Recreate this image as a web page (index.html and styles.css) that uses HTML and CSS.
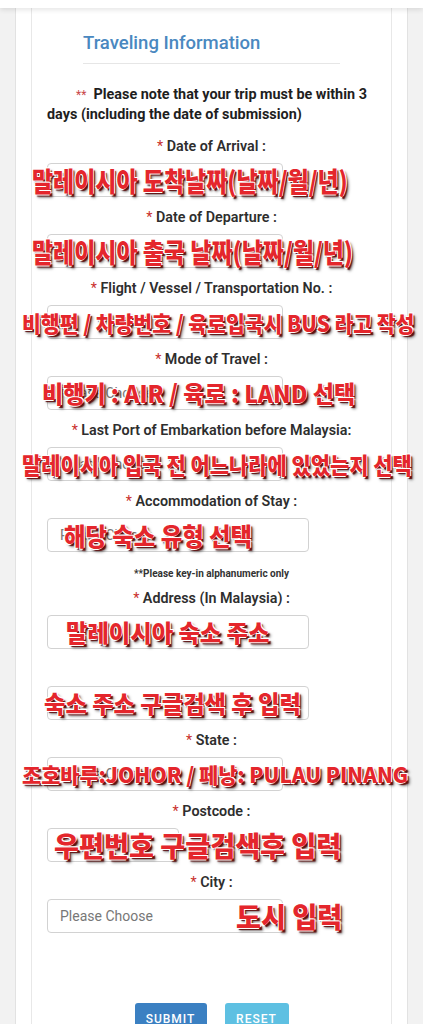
FILE: index.html
```html
<!DOCTYPE html>
<html lang="en">
<head>
<meta charset="utf-8">
<title>Traveling Information</title>
<link rel="stylesheet" href="styles.css">
</head>
<body>
<div class="topbar"></div>
<div class="card">
  <div class="panel">
    <h2 class="title">Traveling Information</h2>
    <hr class="rule">
    <p class="note"><span class="req">**</span>&nbsp; Please note that your trip must be within 3 days (including the date of submission)</p>

    <div class="group">
      <label class="lbl"><span class="req">*</span> Date of Arrival :</label>
      <div class="field w-md"><div class="input"></div><span class="ann ann-1">말레이시아 도착날짜(날짜/월/년)</span></div>
    </div>

    <div class="group">
      <label class="lbl"><span class="req">*</span> Date of Departure :</label>
      <div class="field w-md"><div class="input"></div><span class="ann ann-2">말레이시아 출국 날짜(날짜/월/년)</span></div>
    </div>

    <div class="group">
      <label class="lbl"><span class="req">*</span> Flight / Vessel / Transportation No. :</label>
      <div class="field w-md"><div class="input"></div><span class="ann ann-3">비행편 / 차량번호 / 육로입국시 BUS 라고 작성</span></div>
    </div>

    <div class="group">
      <label class="lbl"><span class="req">*</span> Mode of Travel :</label>
      <div class="field w-md"><div class="input ph">Please Choose</div><span class="ann ann-4">비행기 : AIR / 육로 : LAND 선택</span></div>
    </div>

    <div class="group">
      <label class="lbl"><span class="req">*</span> Last Port of Embarkation before Malaysia:</label>
      <div class="field w-md"><div class="input ph">Please Choose</div><span class="ann ann-5">말레이시아 입국 전 어느나라에 있었는지 선택</span></div>
    </div>

    <div class="group">
      <label class="lbl"><span class="req">*</span> Accommodation of Stay :</label>
      <div class="field w-lg"><div class="input ph">Please Choose</div><span class="ann ann-6">해당 숙소 유형 선택</span></div>
    </div>

    <p class="hint">**Please key-in alphanumeric only</p>

    <div class="group">
      <label class="lbl"><span class="req">*</span> Address (In Malaysia) :</label>
      <div class="field w-lg"><div class="input"></div><span class="ann ann-7">말레이시아 숙소 주소</span></div>
      <div class="field w-lg addr2"><div class="input"></div><span class="ann ann-8">숙소 주소 구글검색 후 입력</span></div>
    </div>

    <div class="group">
      <label class="lbl"><span class="req">*</span> State :</label>
      <div class="field w-md"><div class="input ph">Please Choose</div><span class="ann ann-9">조호바루:JOHOR / 페낭: PULAU PINANG</span></div>
    </div>

    <div class="group">
      <label class="lbl"><span class="req">*</span> Postcode :</label>
      <div class="field w-sm"><div class="input"></div><span class="ann ann-10">우편번호 구글검색후 입력</span></div>
    </div>

    <div class="group">
      <label class="lbl"><span class="req">*</span> City :</label>
      <div class="field w-md"><div class="input ph">Please Choose</div><span class="ann ann-11">도시 입력</span></div>
    </div>

    <div class="actions">
      <button class="btn btn-submit" type="button">SUBMIT</button>
      <button class="btn btn-reset" type="button">RESET</button>
    </div>
  </div>
</div>
</body>
</html>
```

FILE: styles.css
```css
* { box-sizing: border-box; }
html, body { margin: 0; padding: 0; }
body {
  background: #f2f2f2;
  font-family: Roboto, "Liberation Sans", Arial, sans-serif;
  color: #333;
  width: 423px;
  overflow: hidden;
}
.topbar {
  height: 8px;
  background: #fff;
  box-shadow: 0 2px 5px rgba(0,0,0,0.10);
  position: relative;
  z-index: 2;
}
.card {
  margin: 0 15px;
  background: #fff;
  border-left: 1px solid #e2e2e2;
  border-right: 1px solid #e2e2e2;
  padding: 0 15px;
  min-height: 1100px;
}
.panel {
  border-left: 1px solid #e8e8e8;
  border-right: 1px solid #e8e8e8;
  padding: 24px 15px 0;
  min-height: 1100px;
}
.title {
  margin: 0 36px;
  font-size: 18.5px;
  line-height: 22px;
  font-weight: 500;
  color: #4a88c0;
}
.rule {
  margin: 9px 36px 0;
  border: 0;
  border-top: 1px solid #e6e6e6;
  height: 0;
}
.note {
  margin: 21px 0 0;
  text-indent: 29px;
  font-size: 14.4px;
  line-height: 20px;
  font-weight: 700;
  color: #1e1e1e;
}
.req { color: #c9302c; font-weight: 400; }
.note .req { font-size: 12px; color: #c9484a; }
.group {
  margin-top: 13px;
  display: flex;
  flex-direction: column;
  align-items: flex-start;
}
.group + .group { margin-top: 12px; }
.lbl {
  align-self: stretch;
  text-align: center;
  font-size: 14.3px;
  line-height: 17px;
  font-weight: 600;
  color: #2e2e2e;
  margin-bottom: 8px;
}
.field {
  position: relative;
  height: 34px;
}
.w-md { width: 236px; }
.w-lg { width: 262px; }
.w-sm { width: 132px; }
.addr2 { margin-top: 37px; }
.input {
  height: 34px;
  border: 1px solid #d2d2d2;
  border-radius: 4px;
  background: #fff;
  padding: 0 12px;
  font-size: 14px;
  line-height: 32px;
  color: #777;
  white-space: nowrap;
  overflow: hidden;
}
.hint {
  margin: 16px 0 0;
  text-align: center;
  font-size: 10px;
  line-height: 12px;
  font-weight: 700;
  color: #333;
}
.hint + .group { margin-top: 10px; }
.ann {
  --sx: 1;
  position: absolute;
  top: 50%;
  transform: translateY(-50%) scaleX(var(--sx));
  transform-origin: left center;
  white-space: nowrap;
  font-family: "Noto Sans CJK KR", "Noto Sans", sans-serif;
  font-weight: 900;
  color: #e4262c;
  line-height: 1;
  text-shadow: -1px -1px 0 #fff, 1px -1px 0 #fff, -1px 1px 0 #fff,
    2px 2px 1px #5e1010, 3px 3px 3px rgba(0,0,0,0.5);
  pointer-events: none;
}
.ann-1, .ann-2 { left: -15px; font-size: 27px; --sx: 0.85; }
.ann-3 { left: -25px; font-size: 22px; --sx: 0.93; }
.ann-4 { left: -5px; font-size: 24px; --sx: 0.96; }
.ann-5 { left: -25px; font-size: 23px; --sx: 0.91; }
.ann-6 { left: 17px; font-size: 25px; --sx: 0.935; }
.ann-7 { left: 19px; font-size: 24px; --sx: 0.97; }
.ann-8 { left: -3px; font-size: 24px; --sx: 0.97; }
.ann-9 { left: -25px; font-size: 21px; --sx: 0.99; }
.ann-10 { left: 7px; font-size: 28px; --sx: 0.97; }
.ann-11 { left: 189px; font-size: 28px; --sx: 0.97; }
.actions {
  margin-top: 70px;
  display: flex;
  justify-content: center;
  gap: 18px;
}
.btn {
  border: 0;
  border-radius: 3px;
  color: #fff;
  font-family: Roboto, "Liberation Sans", Arial, sans-serif;
  font-size: 12px;
  letter-spacing: 1px;
  font-weight: 500;
  height: 32px;
  padding: 0;
}
.btn-submit { background: #3b80c2; width: 72px; }
.btn-reset { background: #5ec0e2; width: 64px; }
```
